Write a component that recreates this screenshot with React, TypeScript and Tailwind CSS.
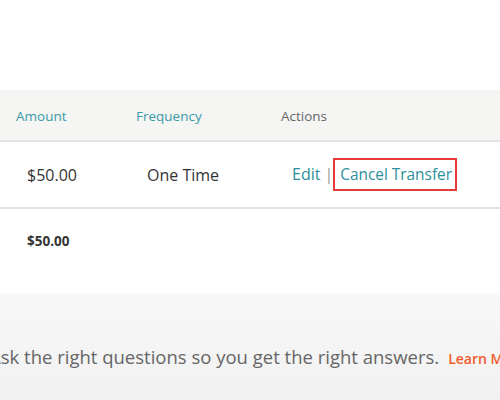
export default function App() {
	return (
		<div className="w-[500px] h-[400px] overflow-hidden bg-white font-['Open_Sans',sans-serif]">
			<div className="h-[90px]" />
			<div className="grid grid-cols-[120px_145px_1fr] h-[52px] items-center bg-[#f5f5f4] border-b-2 border-[#e3e3e3] text-[13.5px] text-[#3a9ba6]">
				<div className="pl-[16px] pt-[3px]">Amount</div>
				<div className="pl-[16px] pt-[3px]">Frequency</div>
				<div className="pl-[16px] pt-[3px] text-[#666]">Actions</div>
			</div>
			<div className="grid grid-cols-[120px_145px_1fr] h-[67px] items-center border-b-2 border-[#e3e3e3] text-[16px] text-[#333]">
				<div className="pl-[27px]">$50.00</div>
				<div className="pl-[27px]">One Time</div>
				<div className="pl-[27px] flex items-center text-[#2d8f9c]">
					<span>Edit</span>
					<span className="ml-[4px] text-[#999]">|</span>
					<span className="pl-[5px] pr-[3px] py-[3px] border-2 border-[#e5393a] text-[15.4px]">Cancel Transfer</span>
				</div>
			</div>
			<div className="h-[64px] flex items-center pl-[27px] text-[13.5px] font-bold text-[#333]">$50.00</div>
			<div className="h-[20px]" />
			<div className="h-[107px] bg-gradient-to-b from-[#f8f8f8] to-[#f1f1f1] flex items-center">
				<div className="-ml-[11px] flex items-baseline whitespace-nowrap pt-[20px]">
					<span className="text-[18.5px] text-[#666]">Ask the right questions so you get the right answers.</span>
					<span className="ml-[9px] text-[14px] font-semibold text-[#f15a29]">Learn More</span>
				</div>
			</div>
		</div>
	);
}
